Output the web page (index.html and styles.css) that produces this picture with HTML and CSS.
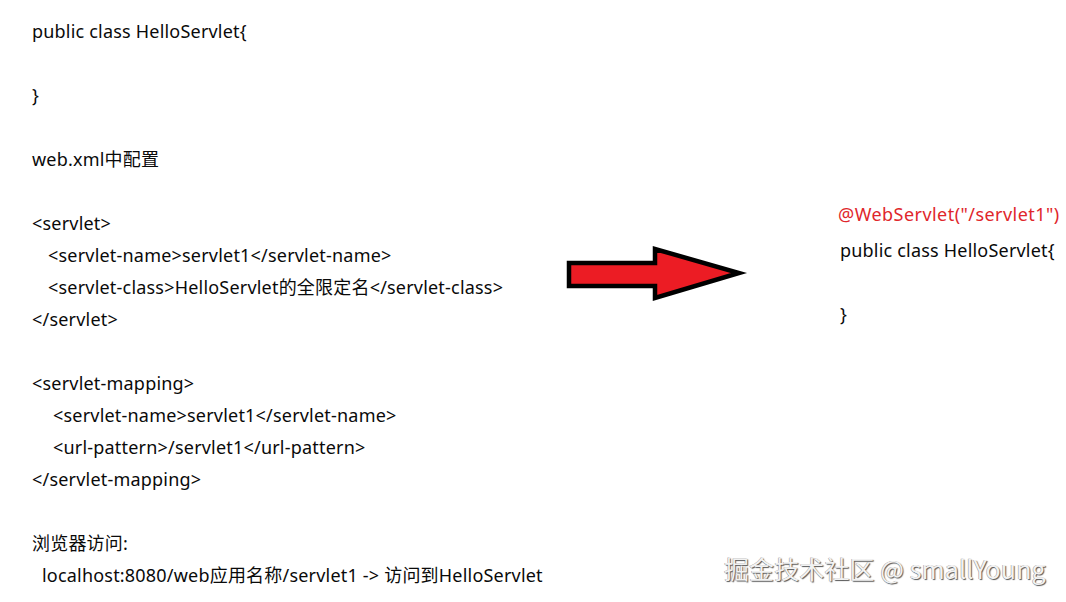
FILE: index.html
```html
<!DOCTYPE html>
<html lang="zh">
<head>
<meta charset="utf-8">
<link rel="stylesheet" href="styles.css">
</head>
<body>
<div class="page">
  <div class="left">
    <div class="ln">public class HelloServlet{</div>
    <div class="ln"></div>
    <div class="ln">}</div>
    <div class="ln"></div>
    <div class="ln">web.xml中配置</div>
    <div class="ln"></div>
    <div class="ln">&lt;servlet&gt;</div>
    <div class="ln i1">&lt;servlet-name&gt;servlet1&lt;/servlet-name&gt;</div>
    <div class="ln i1">&lt;servlet-class&gt;HelloServlet的全限定名&lt;/servlet-class&gt;</div>
    <div class="ln">&lt;/servlet&gt;</div>
    <div class="ln"></div>
    <div class="ln">&lt;servlet-mapping&gt;</div>
    <div class="ln i2">&lt;servlet-name&gt;servlet1&lt;/servlet-name&gt;</div>
    <div class="ln i2">&lt;url-pattern&gt;/servlet1&lt;/url-pattern&gt;</div>
    <div class="ln">&lt;/servlet-mapping&gt;</div>
    <div class="ln"></div>
    <div class="ln">浏览器访问:</div>
    <div class="ln i3">localhost:8080/web应用名称/servlet1 -&gt; 访问到HelloServlet</div>
  </div>
  <div class="arrow">
    <svg width="182" height="56" viewBox="0 0 182 56">
      <path d="M3 17 L89 17 L89 3 L173 27 L89 52 L89 40 L3 40 Z" fill="#ec1c24" stroke="#000" stroke-width="4.5" stroke-linejoin="miter"/>
    </svg>
  </div>
  <div class="right">
    <div class="rl red">@WebServlet("/servlet1")</div>
    <div class="rl">public class HelloServlet{</div>
    <div class="rl gap">}</div>
  </div>
</div>
<div class="wm">掘金技术社区 @ smallYoung</div>
</body>
</html>
```
FILE: styles.css
```css
html, body {
  margin: 0;
  padding: 0;
  background: #fff;
}
body {
  width: 1066px;
  height: 602px;
  overflow: hidden;
  position: relative;
  font-family: "Noto Sans", "Noto Sans CJK SC", sans-serif;
  font-size: 18px;
  letter-spacing: 0.2px;
  color: #0a0a0a;
}
.page {
  display: flex;
  align-items: flex-start;
  padding: 15px 0 0 32px;
}
.left {
  width: 534px;
  flex: none;
}
.ln {
  height: 32px;
  line-height: 32px;
  white-space: pre;
}
.i1 { padding-left: 16px; }
.i2 { padding-left: 21px; }
.i3 { padding-left: 10px; }
.arrow {
  margin-top: 231px;
  flex: none;
  display: flex;
}
.right {
  margin-top: 183px;
  margin-left: 90px;
}
.rl {
  line-height: 32px;
  height: 32px;
  padding-left: 2px;
  white-space: pre;
}
.rl.red {
  color: #e0262b;
  padding-left: 0;
  margin-bottom: 4px;
  letter-spacing: 0.45px;
}
.rl.gap {
  margin-top: 32px;
}
.wm {
  position: absolute;
  left: 724px;
  top: 550px;
  font-family: "Noto Sans CJK SC", "Noto Sans", sans-serif;
  font-size: 25px;
  line-height: 36px;
  color: #f2f2f2;
  text-shadow: 1px 1px 1px #555, -0.5px -0.5px 0 #999;
  letter-spacing: 0.1px;
}
```
